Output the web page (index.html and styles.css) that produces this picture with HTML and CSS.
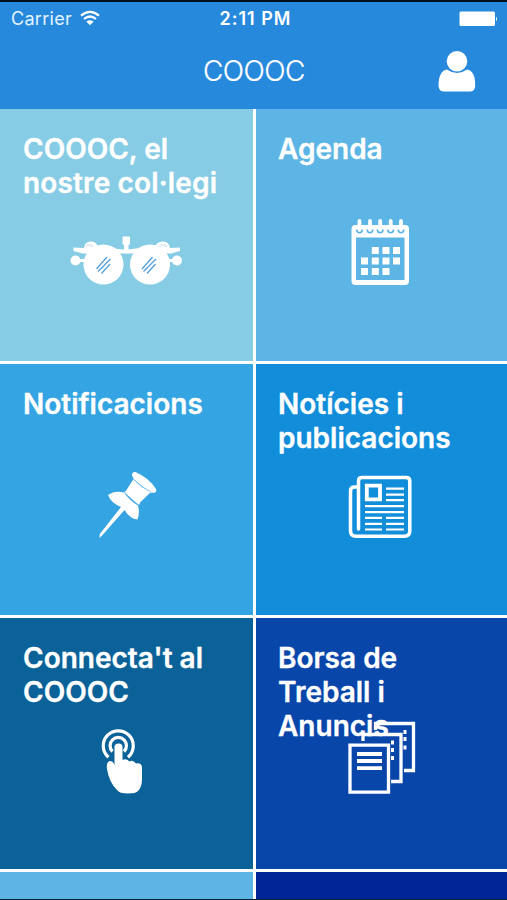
FILE: index.html
```html
<!DOCTYPE html>
<html lang="ca">
<head>
<meta charset="utf-8">
<title>COOOC</title>
<link rel="stylesheet" href="styles.css">
</head>
<body>
<div class="app">
  <header class="header">
    <div class="status">
      <div class="carrier"><span>Carrier</span>
        <svg class="wifi" width="20" height="15" viewBox="80 9 20 15" fill="none" stroke="#fff" stroke-width="2.2"><path d="M81 14.6Q90 7 99 14.6M84 18Q90 13 96 18"/><path d="M86.4 20.7Q90 17.8 93.600 20.700L90 24.200Z" fill="#fff" stroke="none"/></svg>
      </div>
      <time class="clock">2:11 PM</time>
      <svg class="battery" width="39" height="16" viewBox="459 10 39 16" fill="#fff"><rect x="459.500" y="10.500" width="35.500" height="14.500" rx="1.500"/><path d="M496 15.500q2 2.500 0 5z"/></svg>
    </div>
    <div class="navbar">
      <h1 class="title">COOOC</h1>
      <svg class="user" width="39" height="43" viewBox="437 50 39 43" fill="#fff"><circle cx="457" cy="61.300" r="10.300"/><path d="M447 69.500Q457 76.500 467 69.500Q475.500 71 475.200 86Q475 91.600 469.500 91.600H444.500Q438.700 91.600 438.500 86Q438.500 71 447 69.500Z"/></svg>
    </div>
  </header>
  <main class="tiles">
    <section class="tile sky">
      <h2 class="label">COOOC, el<br><span class="roomy">nostre col·legi</span></h2>
      <svg class="icon" viewBox="61 210 131 90" fill="#fff"><circle cx="103.500" cy="264.500" r="20"/><circle cx="150" cy="264.500" r="20"/><circle cx="75.500" cy="260.500" r="5"/><circle cx="177" cy="260.500" r="5"/><path d="M73.500 247.500L84 248Q84.500 241.500 91 241.500Q96 241.500 97.500 246L106 248L124 249.500V245L122.500 244V237.500Q122.500 236.500 124 236.500H128.500Q130 236.500 130 237.500V244L128.500 245V249.500L148 247L156 245Q158 241.500 163 241.500Q169 241.500 170 248L180 247.500V251L171 253.500H83L73.500 251ZM76 259H89V262H76ZM164 259H177V262H164Z"/><path d="M86 247l1.500-3 1 2 2-2 1 3 2-2M160 247l2-3 1 2 2-2 1 3 2-2" fill="none" stroke="#c4dbe4" stroke-width=".8"/><path d="M96.500 269L107 257M98 271.500L110.500 259M101.500 273.500L110 264M142 269L152.500 257M143.500 271.500L156 259M147 273.500L155.500 264" stroke="#559fda" stroke-width="1.300"/></svg>
    </section>
    <section class="tile light">
      <h2 class="label label-right">Agenda</h2>
      <svg class="icon" viewBox="316 210 131 90" fill="#fff"><path fill-rule="evenodd" d="M355.500 225H405Q409 225 409 229V281Q409 285 405 285H355.500Q351.500 285 351.500 281V229Q351.500 225 355.500 225ZM356 237.500V280H404.500V237.500Z"/><path d="M359.500 221v9M370 221v9M380.200 221v9M390.700 221v9M401 221v9" stroke="#fff" stroke-width="3.800" stroke-linecap="round"/><path d="M356.700 229.500q0 3.200 2.800 3.200t2.800-3.200M367.200 229.500q0 3.200 2.800 3.200t2.800-3.200M377.400 229.500q0 3.200 2.800 3.200t2.800-3.200M387.900 229.500q0 3.200 2.800 3.200t2.800-3.200M398.200 229.500q0 3.200 2.800 3.200t2.800-3.200" fill="none" stroke="#5cb4e4" stroke-width="1.600"/><path d="M371.800 247h7v7h-7zM382.500 247h7v7h-7zM393 247h7v7h-7zM361 257.500h7v7h-7zM371.800 257.500h7v7h-7zM382.500 257.500h7v7h-7zM393 257.500h7v7h-7zM361 268h7v7h-7zM371.800 268h7v7h-7zM382.500 268h7v7h-7z"/></svg>
    </section>
    <section class="tile azure">
      <h2 class="label">Notificacions</h2>
      <svg class="icon" viewBox="61 465 131 90" fill="#fff"><path d="M132 474Q133 471.500 136 472.300Q149 478 156 489Q157 492 154 493Q142 487 132 476ZM133.500 479Q142 488 151 492L138.500 504Q132 500 125.500 491.500ZM108 495Q115 490 124 492.500Q130 501 138 505.500Q140 513 137.500 519.500Q130 519 124.500 510L102.500 535L99.500 538L99.800 534L121 507Q111 503 108 495Z"/><path d="M133 475.500L154 492L151 493L133.500 479Z"/><path d="M124 492L139 505L140 503L125.500 491Z"/><path d="M124.500 492Q130 500.500 138.500 504.800M132.500 478.500Q141 488 151.500 492" fill="none" stroke="#72bce7" stroke-width=".7"/></svg>
    </section>
    <section class="tile blue">
      <h2 class="label label-right">Notícies i<br>publicacions</h2>
      <svg class="icon" viewBox="316 465 131 90" fill="none" stroke="#fff" stroke-width="3.500"><path d="M358.500 529V481Q358.500 477.500 362 477.500H406Q409.800 477.500 409.800 481V531Q409.800 536.200 404.500 536.200H356Q350.500 536.200 350.500 531V491Q350.500 487 354.500 487H358.500" stroke-linecap="round"/><path d="M366.800 485.700H380V499.300H366.800Z" stroke-width="3.800"/><path d="M386 488.700H404M386 494.700H404M386 500.200H404M365 506.200H404M365 512.200H404M365 517.900H382M386 517.900H404M365 523.800H382M386 523.800H404M365 529.500H382M386 529.500H404" stroke-width="2.200"/></svg>
    </section>
    <section class="tile teal">
      <h2 class="label">Connecta't al<br>COOOC</h2>
      <svg class="icon" viewBox="61 719 131 90" fill="#fff"><path d="M108.500 757.200A15 15 0 1 1 128 757.200M112.500 751.500A8.200 8.200 0 1 1 124 751.500" fill="none" stroke="#fff" stroke-width="3.200"/><path d="M114.500 747Q114.500 743.500 118.500 743.500Q122.500 743.500 122.500 747V760Q126 758 129.500 761.500Q133 759.500 136 763.500Q142 762.500 142 768V779Q142 787 138 791Q136 793.500 128 793.500Q119.500 793.500 117 790Q109 782 107 769Q106 762.500 109.500 761Q113 760.500 114.500 765Z"/></svg>
    </section>
    <section class="tile royal">
      <h2 class="label label-right">Borsa de<br>Treball i<br>Anuncis</h2>
      <svg class="icon" viewBox="316 719 131 90" fill="none" stroke="#fff" stroke-width="3.300"><path d="M375.500 730V723.500H413.500V770.500H404M363 741V734.500H401V781.500H391M350 745.200H388.500V792.200H350Z"/><path d="M357 754H382M357 761H382M357 768.200H382" stroke-width="3.800"/><path d="M391 742.500h3M391 750h3M391 758h3M403.500 732h3M403.500 739h3M403.500 747.500h3" stroke-width="4"/></svg>
    </section>
    <section class="tile light"></section>
    <section class="tile navy"></section>
  </main>
</div>
</body>
</html>
```
FILE: styles.css
```css
* { box-sizing: border-box; }
body {
  margin: 0;
  background: #fff;
  color: #fff;
  font-family: Inter, "Liberation Sans", sans-serif;
}
.app {
  height: 900px;
  display: flex;
  flex-direction: column;
  overflow: hidden;
  border-bottom: 1px solid #062036;
}
.header {
  height: 109px;
  flex: none;
  background: #2789dc;
  border-top: 2px solid #03111e;
}
.status {
  display: grid;
  grid-template-columns: 1fr auto 1fr;
  align-items: center;
  height: 33px;
  padding: 0 9px 0 13px;
}
.carrier {
  display: flex;
  align-items: center;
  gap: 8px;
  margin-left: -2px;
  font-size: 18px;
  letter-spacing: .3px;
  color: #e2f4ff;
}
.wifi { margin-top: -3px; }
.clock {
  font-size: 18px;
  font-weight: 600;
  letter-spacing: 1px;
}
.battery { justify-self: end; }
.navbar {
  display: grid;
  grid-template-columns: 1fr auto 1fr;
  align-items: center;
  height: 72px;
  padding-right: 31px;
  padding-left: 32px;
}
.title {
  grid-column: 2;
  margin: 0;
  font-size: 28px;
  font-weight: 300;
  letter-spacing: -.5px;
  -webkit-text-stroke: .2px #fff;
}
.user { justify-self: end; }
.tiles {
  display: grid;
  grid-template-columns: 253px 251px;
  grid-template-rows: 252px 251px 251px 27px;
  gap: 3px;
}
.tile {
  display: grid;
  grid-template-columns: 100%;
  grid-template-rows: 100%;
}
.label, .icon { grid-area: 1 / 1; }
.label {
  margin: 0;
  padding: 22.500px 0 0 23px;
  font-size: 28px;
  font-weight: 600;
  line-height: 34.200px;
  white-space: nowrap;
  font-feature-settings: "locl" 0, "calt" 0, "ccmp" 0;
  -webkit-text-stroke: .35px #fff;
}
.label-right { padding-left: 22px; }
.roomy { letter-spacing: .15px; }
.icon {
  width: 131px;
  height: 90px;
  margin-top: 101px;
  justify-self: center;
}
.sky { background: #87cce5; }
.light { background: #5cb5e4; }
.azure { background: #34a4e2; }
.blue { background: #118dda; }
.teal { background: #0b6299; }
.royal { background: #0846aa; }
.navy { background: #002596; }
```
